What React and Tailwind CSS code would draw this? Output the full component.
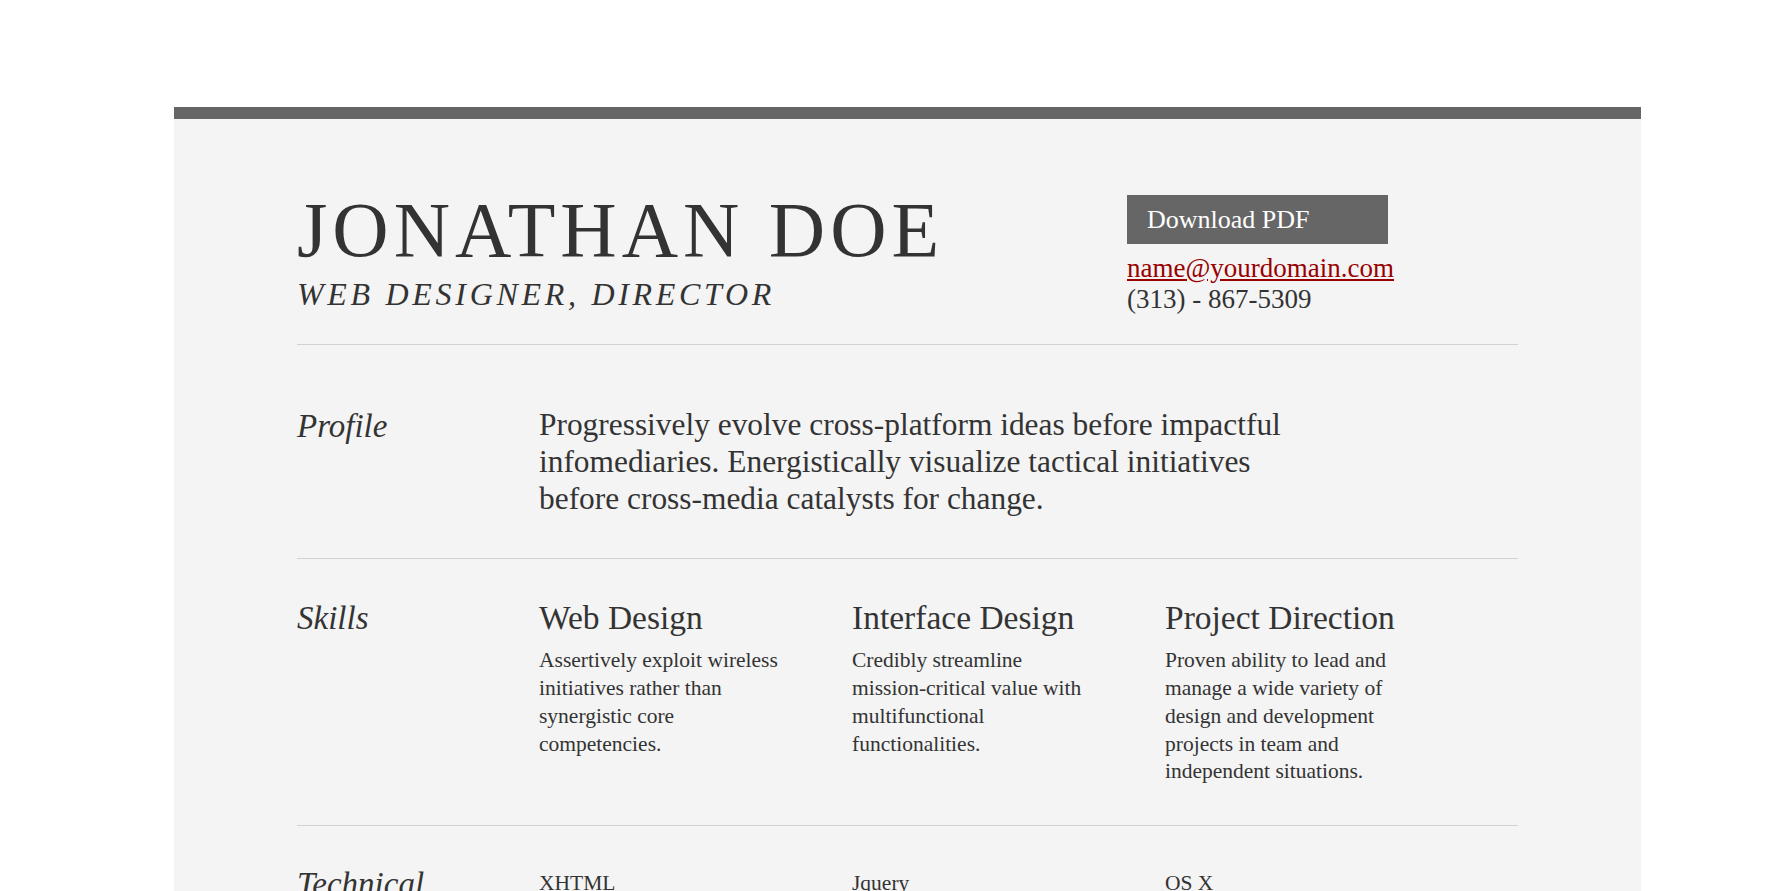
import React from 'react';

const skills = [
  {
    title: 'Web Design',
    text: 'Assertively exploit wireless initiatives rather than synergistic core competencies.',
  },
  {
    title: 'Interface Design',
    text: 'Credibly streamline mission-critical value with multifunctional functionalities.',
  },
  {
    title: 'Project Direction',
    text: 'Proven ability to lead and manage a wide variety of design and development projects in team and independent situations.',
  },
];

const technical = [
  ['XHTML', 'CSS', 'Javascript'],
  ['Jquery', 'PHP', 'CVS / Subversion'],
  ['OS X', 'Windows XP/Vista/7', 'Linux'],
];

function Label({ children }) {
  return <h2 className="w-[242px] shrink-0 text-[33px] italic leading-[38.4px] font-normal">{children}</h2>;
}

export default function App() {
  return (
    <div className="min-h-screen bg-white pt-[107px] pb-16 font-['Liberation_Serif',serif] text-[#333]">
      <div className="ml-[174px] w-[1467px] border-t-[12px] border-[#666] bg-[#f4f4f4] px-[123px]">
        {/* header */}
        <header className="flex items-start border-b border-[#d2d2d2] pt-[72px] pb-[29px]">
          <div className="flex-1">
            <h1 className="text-[78px] leading-none font-normal tracking-[5px]">JONATHAN DOE</h1>
            <p className="mt-[9px] text-[32px] leading-none italic tracking-[3.7px]">WEB DESIGNER, DIRECTOR</p>
          </div>
          <div className="mt-[4px] w-[391px]">
            <a href="#" className="flex h-[49px] w-[261px] items-center bg-[#666] pl-[20px] text-[26px] leading-none text-white">
              Download PDF
            </a>
            <div className="mt-[9px] text-[27px] leading-[31px]">
              <a href="#" className="text-[#990000] underline">name@yourdomain.com</a>
              <p>(313) - 867-5309</p>
            </div>
          </div>
        </header>

        {/* profile */}
        <section className="flex border-b border-[#d2d2d2] pt-[62px] pb-[41px]">
          <Label>Profile</Label>
          <p className="w-[775px] text-[31.4px] leading-[36.8px]">
            Progressively evolve cross-platform ideas before impactful infomediaries. Energistically visualize tactical initiatives before cross-media catalysts for change.
          </p>
        </section>

        {/* skills */}
        <section className="flex border-b border-[#d2d2d2] pt-[40px] pb-[39px]">
          <Label>Skills</Label>
          <div className="flex">
            {skills.map((s) => (
              <article key={s.title} className="w-[313px]">
                <h3 className="text-[33.5px] leading-[38.4px] font-normal">{s.title}</h3>
                <p className="mt-[9px] w-[244px] text-[21.5px] leading-[27.9px]">{s.text}</p>
              </article>
            ))}
          </div>
        </section>

        {/* technical */}
        <section className="flex border-b border-[#d2d2d2] pt-[39px] pb-[41px]">
          <Label>Technical</Label>
          <div className="flex pt-[5px]">
            {technical.map((col, i) => (
              <ul key={i} className="w-[313px] text-[21.5px] leading-[27.9px]">
                {col.map((item) => (
                  <li key={item}>{item}</li>
                ))}
              </ul>
            ))}
          </div>
        </section>
      </div>
    </div>
  );
}
